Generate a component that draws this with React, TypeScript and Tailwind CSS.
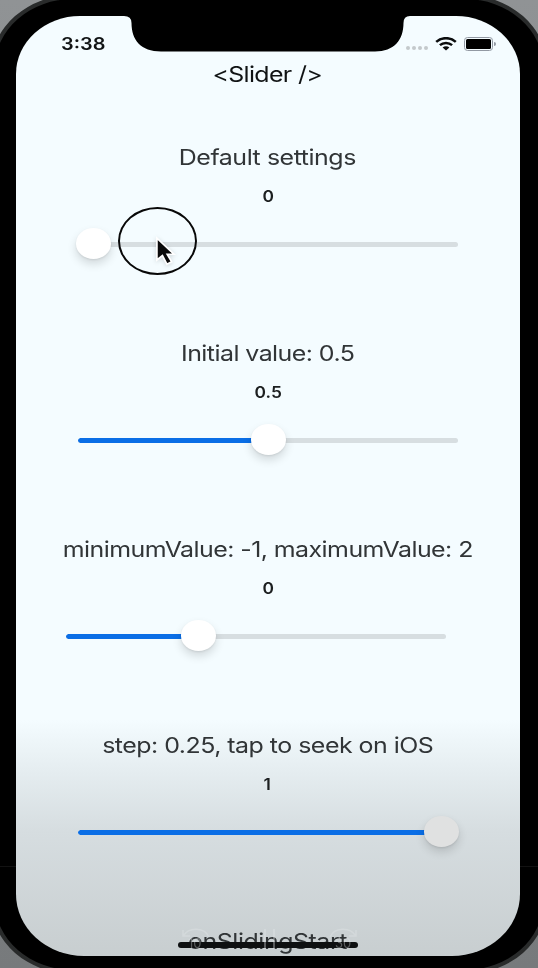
import React from "react";

type SliderRow = {
  title: string;
  value: string;
  tracking: string;
  track: string;
  fill: string;
  thumb: string;
  thumbColor: string;
  trackColor: string;
};

const rows: SliderRow[] = [
  { title: "Default settings", value: "0", tracking: "tracking-[-0.39px]", track: "ml-[62px]", fill: "w-0", thumb: "left-[-2px]", thumbColor: "bg-white", trackColor: "bg-[#d7dee1]" },
  { title: "Initial value: 0.5", value: "0.5", tracking: "tracking-[-0.48px]", track: "ml-[62px]", fill: "w-[190px]", thumb: "left-[173px]", thumbColor: "bg-white", trackColor: "bg-[#d7dee1]" },
  { title: "minimumValue: -1, maximumValue: 2", value: "0", tracking: "tracking-[-0.48px]", track: "ml-[50px]", fill: "w-[130px]", thumb: "left-[115px]", thumbColor: "bg-white", trackColor: "bg-[#d7dee1]" },
  { title: "step: 0.25, tap to seek on iOS", value: "1", tracking: "tracking-[-0.44px]", track: "ml-[62px]", fill: "w-[360px]", thumb: "left-[346px]", thumbColor: "bg-[#e0e1e1]", trackColor: "bg-transparent" },
];

function Pointer() {
  return (
    <>
      <div className="absolute left-[40px] top-[-20px] h-[68px] w-[79px] rounded-[50%] border-[2.5px] border-[#080808]" />
      <svg className="absolute left-[75px] top-[8px] drop-shadow-sm" width="28" height="34" viewBox="0 0 26 32">
        <path d="M3.5 3v20.500l5.200-4.200 4.200 8.200 4.500-2.200-4.200-7.200h6.300z" fill="#0a0a0a" stroke="#fff" strokeWidth="1.6" />
      </svg>
    </>
  );
}

function Section({ row, pointer }: { row: SliderRow; pointer?: boolean }) {
  return (
    <section className="flex h-[196px] shrink-0 flex-col">
      <div className="flex h-[54px] items-center justify-center">
        <h2 className={`scale-x-[1.16] whitespace-nowrap text-[21.5px] text-[#313537] ${row.tracking}`}>{row.title}</h2>
      </div>
      <div className="flex h-[24px] items-center justify-center pt-[2px]">
        <span className="scale-x-[1.12] text-[15.5px] font-semibold text-[#1c1f20]">{row.value}</span>
      </div>
      <div className={`relative mt-[19px] flex h-[34px] w-[380px] items-center pt-[1px] ${row.track}`}>
        <div className={`h-[5px] w-full overflow-hidden rounded-full ${row.trackColor}`}>
          <div className={`h-full rounded-l-full bg-[#0a6ee6] ${row.fill}`} />
        </div>
        <div className={`absolute top-[1px] h-[30.5px] w-[35px] rounded-[50%] shadow-[0_5px_10px_rgba(0,0,0,0.14),0_1px_2px_rgba(0,0,0,0.08)] ${row.thumb} ${row.thumbColor}`} />
        {pointer && <Pointer />}
      </div>
    </section>
  );
}

function StatusBar() {
  return (
    <div className="flex h-[28px] items-center pl-[45px] pr-[24px]">
      <span className="origin-left scale-x-[1.17] pt-[2px] text-[17px] font-semibold text-[#101314]">3:38</span>
      <div className="ml-auto flex items-center">
        <div className="mr-[7px] mt-[8px] flex gap-[2px]">
          <i className="size-[4px] rounded-full bg-[#c3c9cc]" />
          <i className="size-[4px] rounded-full bg-[#c3c9cc]" />
          <i className="size-[4px] rounded-full bg-[#c3c9cc]" />
          <i className="size-[4px] rounded-full bg-[#c3c9cc]" />
        </div>
        <svg className="-mt-px" width="22" height="14" viewBox="0 0 22 14" fill="none" stroke="#0b0d0e" strokeWidth="2.5">
          <path d="M1.2 4.900C6.600-.1 15.400-.1 20.800 4.900M4.900 8.200c3.400-3.100 8.800-3.100 12.200 0" />
          <path d="M7.600 10.600c1.900-1.700 4.900-1.700 6.800 0L11 13.600z" fill="#0b0d0e" stroke="none" />
        </svg>
        <div className="-mt-px ml-[7px] h-[14px] w-[29px] rounded-[3.5px] border border-[#9299a3] p-[1px]">
          <div className="h-full rounded-[1.5px] bg-black" />
        </div>
        <div className="ml-[1px] h-[4px] w-[1.5px] rounded-r-full bg-[#9299a3]" />
      </div>
    </div>
  );
}

function SkipIcon({ seconds, flipped }: { seconds: string; flipped?: boolean }) {
  return (
    <div className="relative h-[30px] w-[30px]">
      <svg className={flipped ? "-scale-x-100" : ""} width="30" height="30" viewBox="0 0 30 30" fill="none" stroke="#e4e9eb" strokeWidth="1.5">
        <path d="M2 5v6h7M2.500 10.500A14 12 0 0 1 28 12" />
      </svg>
      <span className="absolute left-[7px] top-[9px] text-[13px] text-[#e4e9eb]">{seconds}</span>
    </div>
  );
}

export default function App() {
  return (
    <main className="relative h-[968px] w-[538px] overflow-hidden bg-[linear-gradient(to_bottom,#909395,#777a7c)] font-['Inter','Liberation_Sans',sans-serif]">
      <div className="-ml-[9px] -mt-[5px] h-[979px] w-[556px] rounded-[82px/72px] border-[4px] border-[#292b2b] bg-black pl-[21px] pt-[17px]">
        <div className="relative flex h-[940px] w-[503.5px] flex-col overflow-hidden [border-radius:64px_64px_68px_68px/58px_58px_62px_62px] bg-[linear-gradient(to_bottom,#f4fcff_0,#f4fcff_704px,#e5edf0_755px,#d6dde0_815px,#c8ced0_940px)]">
          <header className="flex h-[114px] shrink-0 flex-col pt-[14px]">
            <StatusBar />
            <div className="flex h-[32px] items-center justify-center">
              <h1 className="scale-x-[1.16] whitespace-nowrap text-[21.5px] tracking-[-0.57px] text-[#101314]">{"<Slider />"}</h1>
            </div>
          </header>
          {rows.map((row, i) => (
            <Section key={row.title} row={row} pointer={i === 0} />
          ))}
          <div className="flex h-[54px] shrink-0 items-center justify-center">
            <h2 className="scale-x-[1.16] whitespace-nowrap text-[21.5px] tracking-[-0.4px] text-[#313537]">onSlidingStart</h2>
          </div>
          <svg className="absolute left-[107px] top-0" width="290" height="36" viewBox="0 0 290 36">
            <path d="M0 0h1q7.500 0 7.500 7C8.500 24 18 35.500 38 35.500H252C271 35.500 280.500 24 280.500 7Q280.500 0 287 0z" fill="#000" />
          </svg>
          <div className="absolute left-[162px] top-[925.5px] h-[6px] w-[180px] rounded-full bg-[#0e1011]" />
          <div className="absolute left-[165px] top-[909px] flex w-[177px] items-start justify-between opacity-35">
            <SkipIcon seconds="10" />
            <div className="mt-[4px] flex gap-[7px]">
              <i className="h-[20px] w-[2px] bg-[#e4e9eb]" />
              <i className="h-[20px] w-[2px] bg-[#e4e9eb]" />
            </div>
            <SkipIcon seconds="30" flipped />
          </div>
        </div>
      </div>
      <div className="absolute left-0 top-[866px] h-px w-[16px] bg-[#121212]" />
      <div className="absolute right-0 top-[866px] h-px w-[18px] bg-[#121212]" />
    </main>
  );
}
